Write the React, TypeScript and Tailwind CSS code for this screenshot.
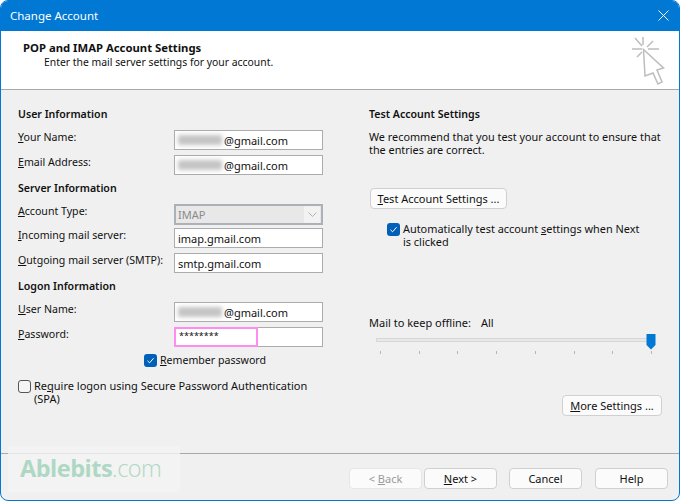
import type { ReactNode } from "react"

const font = "font-['Noto_Sans','Open_Sans',sans-serif] text-[11px] leading-[15px] text-[#111]"
const heading = "font-semibold text-[10.6px]"

function Mail({ value = "@gmail.com" }: { value?: string }) {
  return (
    <div className="relative h-5 w-[149px] border border-[#acacac] bg-white text-[11px] leading-[19px]">
      <div className="absolute left-[3px] top-[4px] h-[10px] w-[44px] bg-[#c4c4c4] blur-[2px]" />
      <span className="absolute left-[49px] top-0">{value}</span>
    </div>
  )
}

function Field({ children }: { children: ReactNode }) {
  return (
    <div className="h-5 w-[149px] border border-[#acacac] bg-white pl-[3px] text-[11px] leading-[19px]">
      {children}
    </div>
  )
}

function Row({ hotkey, rest, mt, children }: { hotkey: string; rest: string; mt: string; children: ReactNode }) {
  return (
    <div className={`flex items-start justify-between ${mt}`}>
      <div className="whitespace-nowrap text-[10.6px]">
        <span className="underline">{hotkey}</span>
        {rest}
      </div>
      {children}
    </div>
  )
}

function Check({ checked }: { checked: boolean }) {
  if (!checked) {
    return <div className="h-[13px] w-[13px] shrink-0 rounded-[3px] border border-[#555] bg-[#f5f5f5]" />
  }
  return (
    <div className="flex h-[13px] w-[13px] shrink-0 items-center justify-center rounded-[3px] bg-[#005fb8]">
      <svg width="9" height="9" viewBox="0 0 9 9" fill="none">
        <path d="M1.5 4.8 L3.6 6.8 L7.6 2.2" stroke="#fff" strokeWidth="1" />
      </svg>
    </div>
  )
}

function Btn({ children, className = "" }: { children: ReactNode; className?: string }) {
  return (
    <div className={`flex h-[21px] items-center justify-center rounded-[4px] border border-[#d0d0d0] bg-[#fbfbfb] ${className}`}>
      {children}
    </div>
  )
}

function Pointer() {
  return (
    <svg width="36" height="50" viewBox="0 0 36 50" fill="none" stroke="#bdbdbd" strokeWidth="1.5" className="-mt-[3px]">
      <path d="M14 0 V8 M3 12 H13 M19 12 H30 M6 1 L13 9 M24 4 L18 10 M8 20 L13 15" />
      <path d="M14.5 12.5 L34.5 31 L28 33 L33 45 L29 47 L24 36 L16 39 Z" fill="#fff" />
    </svg>
  )
}

export default function App() {
  return (
    <div className={`relative h-[501px] w-[680px] overflow-hidden rounded-[8px] border border-[#0078d4] bg-[#f0f0f0] ${font}`}>
      <div className="-mx-px -mt-px flex h-[31px] items-center justify-between bg-[#0078d4] pl-[10px] pr-[11px] text-white">
        <span className="text-[11.5px]">Change Account</span>
        <svg width="11" height="11" viewBox="0 0 11 11" stroke="#fff" strokeWidth="1">
          <path d="M0.5 0.5 L10.5 10.5 M10.5 0.5 L0.5 10.5" />
        </svg>
      </div>

      <div className="flex h-[59px] justify-between border-b border-[#a9a9a9] bg-white pl-[22px] pr-[14px] pt-[9px]">
        <div>
          <div className="text-[11.3px] font-bold">POP and IMAP Account Settings</div>
          <div className="pl-[21px] text-[10.4px]">Enter the mail server settings for your account.</div>
        </div>
        <Pointer />
      </div>

      <div className="flex h-[364px] border-b border-[#a9a9a9] pl-[17px] pt-[17px]">
        <div className="w-[305px]">
          <div className={heading}>User Information</div>
          <Row hotkey="Y" rest="our Name:" mt="mt-[8px]"><Mail /></Row>
          <Row hotkey="E" rest="mail Address:" mt="mt-[5px]"><Mail /></Row>
          <div className={`mt-[6px] ${heading}`}>Server Information</div>
          <Row hotkey="A" rest="ccount Type:" mt="mt-[8px]">
            <div className="flex h-[21px] w-[149px] items-center justify-between border-2 border-[#acb1b8] bg-[#e8e8e8] pl-[2px] pr-px text-[11px] text-[#8a8a8a]">
              IMAP
              <div className="flex h-[17px] w-[16px] items-center justify-center bg-[#f2f2f2]">
                <svg width="9" height="6" viewBox="0 0 9 6" fill="none" stroke="#b0b0b0">
                  <path d="M0.5 0.5 L4.5 4.5 L8.5 0.5" />
                </svg>
              </div>
            </div>
          </Row>
          <Row hotkey="I" rest="ncoming mail server:" mt="mt-[3px]"><Field>imap.gmail.com</Field></Row>
          <Row hotkey="O" rest="utgoing mail server (SMTP):" mt="mt-[5px]"><Field>smtp.gmail.com</Field></Row>
          <div className={`mt-[6px] ${heading}`}>Logon Information</div>
          <Row hotkey="U" rest="ser Name:" mt="mt-[8px]"><Mail /></Row>
          <Row hotkey="P" rest="assword:" mt="mt-[5px]">
            <div className="relative h-5 w-[149px] border border-[#acacac] bg-white">
              <div className="absolute -left-px -top-px h-5 w-[84px] border-2 border-[#ff8cf0] pl-[3px] text-[9px] leading-[14px]">********</div>
            </div>
          </Row>
          <div className="mt-[6px] flex items-center gap-[3px] pl-[126px] text-[10.6px]">
            <Check checked />
            <span><span className="underline">R</span>emember password</span>
          </div>
          <div className="mt-[11px] flex items-start gap-[3px]">
            <div className="mt-px"><Check checked={false} /></div>
            <span className="leading-[13px]">
              Re<span className="underline">q</span>uire logon using Secure Password Authentication
              <br />
              (SPA)
            </span>
          </div>
        </div>

        <div className="ml-[46px] w-[296px]">
          <div className={heading}>Test Account Settings</div>
          <div className="mt-[8px] whitespace-nowrap text-[10.85px] leading-[13px]">
            We recommend that you test your account to ensure that
            <br />
            the entries are correct.
          </div>
          <Btn className="ml-px mt-[32px] w-[137px]">
            <span><span className="underline">T</span>est Account Settings ...</span>
          </Btn>
          <div className="ml-[18px] mt-[13px] flex items-start gap-[3px] text-[10.9px] leading-[13px]">
            <div className="mt-px"><Check checked /></div>
            <span>
              Automatically test account <span className="underline">s</span>ettings when Next
              <br />
              is clicked
            </span>
          </div>
          <div className="mt-[67px] flex gap-[10px]">
            <span>Mail to keep offline:</span>
            <span>All</span>
          </div>
          <div className="relative ml-[7px] mt-[4px] h-[20px] w-[276px]">
            <div className="absolute left-0 right-0 top-[4px] h-[4px] border border-[#d4d8d8] bg-[#e8e8e8]" />
            <svg width="10" height="16" viewBox="0 0 10 16" className="absolute -right-[4px] top-0">
              <path d="M0.5 0 H9.5 V11 L5 15.5 L0.5 11 Z" fill="#0078d4" />
            </svg>
            <div className="absolute inset-x-0 top-[17px] flex justify-between pl-[4px]">
              {[0, 1, 2, 3, 4, 5, 6, 7].map((i) => (
                <div key={i} className="h-[3px] w-px bg-[#b5b5b5]" />
              ))}
            </div>
          </div>
          <div className="flex justify-end">
            <Btn className="mr-[3px] mt-[41px] w-[100px]">
              <span><span className="underline">M</span>ore Settings ...</span>
            </Btn>
          </div>
        </div>
      </div>

      <div className="flex pl-[348px] pt-[14px]">
        <Btn className="w-[73px] border-[#e6e6e6] bg-[#f7f7f7] text-[#9a9a9a]">
          <span>&lt; <span className="underline">B</span>ack</span>
        </Btn>
        <Btn className="ml-[2px] w-[73px] border-[#0067c0] bg-[#e0eef9]">
          <span><span className="underline">N</span>ext &gt;</span>
        </Btn>
        <Btn className="ml-[12px] w-[73px]">Cancel</Btn>
        <Btn className="ml-[13px] w-[73px]">Help</Btn>
      </div>

      <div className="absolute bottom-[8px] left-[7px] h-[46px] w-[172px] bg-[#f4f4f4]/80 pl-[12px] pt-[7px] font-['Open_Sans',sans-serif] text-[23.5px] leading-[30px] tracking-[-0.5px] text-[#aed8c4]">
        <span className="font-bold">Ablebits</span>
        <span className="font-light">.com</span>
      </div>
    </div>
  )
}
